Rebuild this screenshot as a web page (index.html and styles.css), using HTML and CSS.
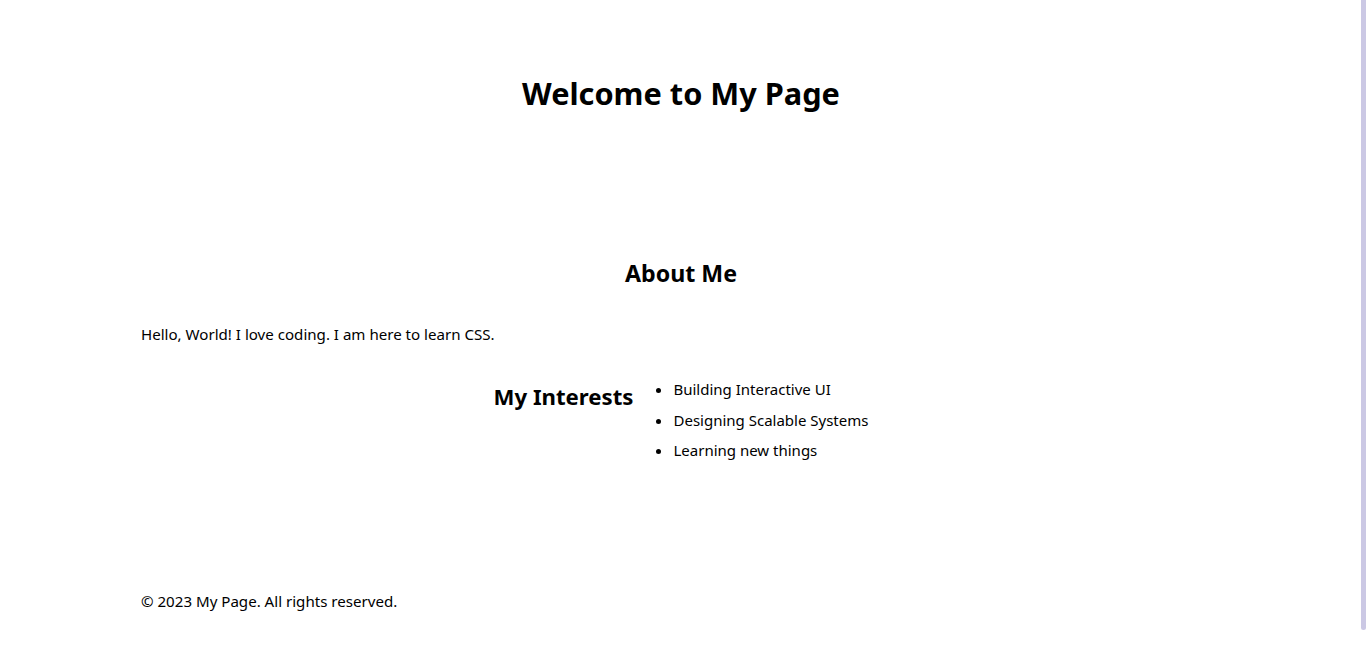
FILE: index.html
```html
<!DOCTYPE html>
<html lang="en">
<head>
<meta charset="utf-8">
<title>My Page</title>
<link rel="stylesheet" href="styles.css">
</head>
<body>
<div class="page">
  <header class="site-header">
    <h1 class="title">Welcome to My Page</h1>
  </header>
  <main class="content">
    <section class="about">
      <h2 class="about-title">About Me</h2>
      <p class="about-text">Hello, World! I love coding. I am here to learn CSS.</p>
    </section>
    <section class="interests">
      <h2 class="interests-title">My Interests</h2>
      <ul class="interests-list">
        <li>Building Interactive UI</li>
        <li>Designing Scalable Systems</li>
        <li>Learning new things</li>
      </ul>
    </section>
  </main>
  <footer class="site-footer">
    <p class="copyright">© 2023 My Page. All rights reserved.</p>
  </footer>
</div>
<div class="scrollbar"></div>
</body>
</html>
```

FILE: styles.css
```css
html, body {
  margin: 0;
  padding: 0;
  background: #ffffff;
}

body {
  font-family: "Noto Sans", "Open Sans", sans-serif;
  color: #000000;
  overflow: hidden;
  height: 649px;
}

.page {
  padding: 0 145px 0 141px;
  display: flex;
  flex-direction: column;
}

.site-header {
  padding-top: 73px;
  text-align: center;
}

.title {
  margin: 0;
  font-size: 30.7px;
  line-height: 40px;
  font-weight: 700;
}

.content {
  display: flex;
  flex-direction: column;
}

.about {
  padding-top: 145px;
}

.about-title {
  margin: 0;
  text-align: center;
  font-size: 23.2px;
  line-height: 30px;
  font-weight: 700;
}

.about-text {
  margin: 35px 0 0;
  font-size: 15.1px;
  line-height: 22px;
}

.interests {
  display: flex;
  justify-content: center;
  align-items: flex-start;
  margin-top: 33px;
}

.interests-title {
  margin: 4px 0 0;
  font-size: 22.2px;
  line-height: 30px;
  font-weight: 700;
}

.interests-list {
  margin: 0;
  padding-left: 40px;
  font-size: 15px;
}

.interests-list li {
  line-height: 22px;
  margin-bottom: 8.5px;
}

.interests-list li:last-child {
  margin-bottom: 0;
}

.site-footer {
  padding-top: 129px;
}

.copyright {
  margin: 0;
  font-size: 15.1px;
  line-height: 22px;
}

.scrollbar {
  position: fixed;
  top: 0;
  right: 0;
  width: 5px;
  height: 630px;
  background: #cbc8e4;
  border-radius: 0 0 3px 3px;
}
```
